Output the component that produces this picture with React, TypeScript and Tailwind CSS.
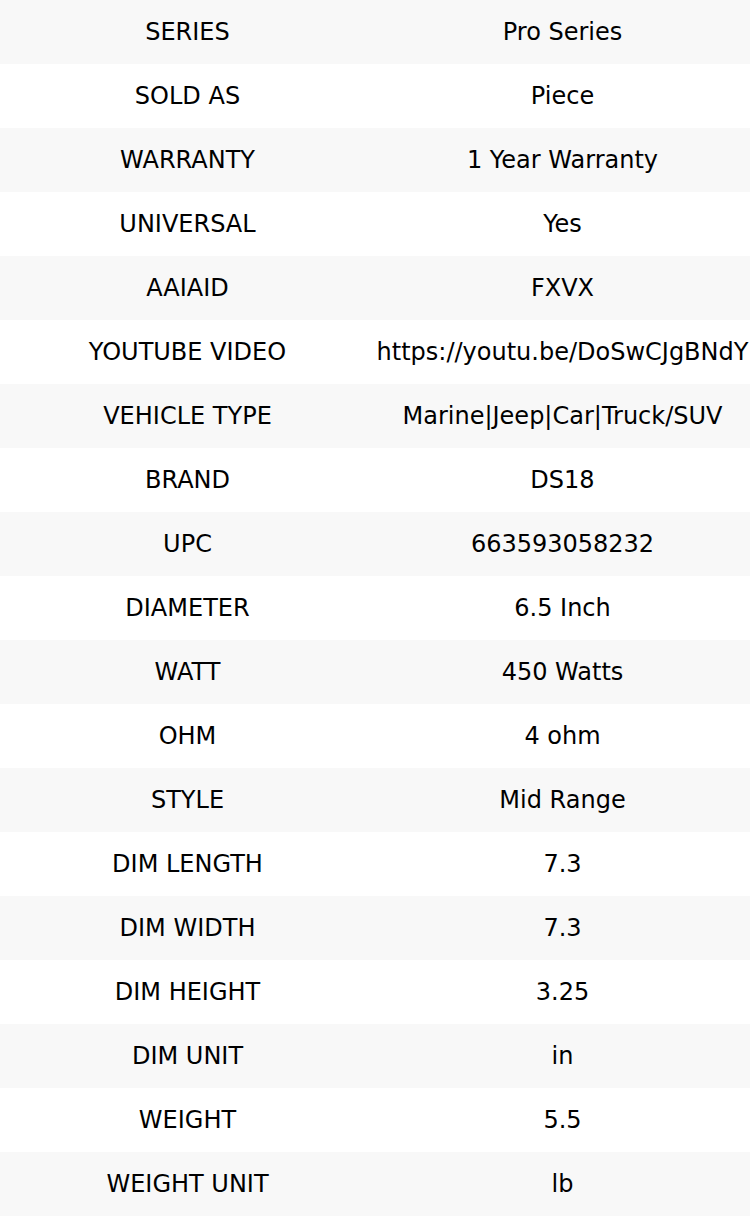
const rows: [string, string][] = [
  ['SERIES', 'Pro Series'],
  ['SOLD AS', 'Piece'],
  ['WARRANTY', '1 Year Warranty'],
  ['UNIVERSAL', 'Yes'],
  ['AAIAID', 'FXVX'],
  ['YOUTUBE VIDEO', 'https://youtu.be/DoSwCJgBNdY'],
  ['VEHICLE TYPE', 'Marine|Jeep|Car|Truck/SUV'],
  ['BRAND', 'DS18'],
  ['UPC', '663593058232'],
  ['DIAMETER', '6.5 Inch'],
  ['WATT', '450 Watts'],
  ['OHM', '4 ohm'],
  ['STYLE', 'Mid Range'],
  ['DIM LENGTH', '7.3'],
  ['DIM WIDTH', '7.3'],
  ['DIM HEIGHT', '3.25'],
  ['DIM UNIT', 'in'],
  ['WEIGHT', '5.5'],
  ['WEIGHT UNIT', 'lb'],
];

export default function App() {
  return (
    <div className="w-[750px] bg-white text-black font-['DejaVu_Sans',sans-serif] text-[24px] overflow-hidden">
      {rows.map(([label, value], i) => (
        <div
          key={label}
          className={`grid grid-cols-2 h-16 ${i % 2 === 0 ? 'bg-[#f8f8f8]' : 'bg-white'}`}
        >
          <div className="flex items-center justify-center whitespace-nowrap">{label}</div>
          <div className="flex items-center justify-center whitespace-nowrap">{value}</div>
        </div>
      ))}
    </div>
  );
}
